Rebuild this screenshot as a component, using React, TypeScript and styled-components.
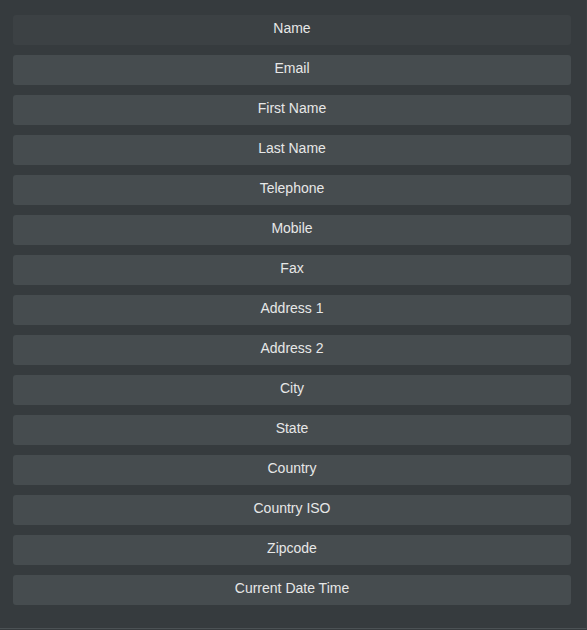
import styled, { createGlobalStyle } from 'styled-components';

const GlobalStyle = createGlobalStyle`
    html, body {
        margin: 0;
        padding: 0;
        background: #363b3e;
    }
`;

const Panel = styled.div`
    box-sizing: border-box;
    width: 587px;
    height: 629px;
    padding: 15px 15px 0 13px;
    background: #363b3e;
    border-bottom: 1px solid #4b5154;
    border-right: 1px solid #3a3f42;
    display: flex;
    flex-direction: column;
    gap: 10px;
    font-family: 'Liberation Sans', Arial, sans-serif;
`;

const Field = styled.div<{ $active?: boolean }>`
    height: 30px;
    display: flex;
    align-items: center;
    justify-content: center;
    border-radius: 3px;
    background: ${(p) => (p.$active ? '#3c4144' : '#464c4f')};
    color: #e6e7e7;
    font-size: 14px;
    padding-bottom: 5px;
    box-sizing: border-box;
`;

const fields = [
    'Name',
    'Email',
    'First Name',
    'Last Name',
    'Telephone',
    'Mobile',
    'Fax',
    'Address 1',
    'Address 2',
    'City',
    'State',
    'Country',
    'Country ISO',
    'Zipcode',
    'Current Date Time',
];

const App = () => {
    return (
        <>
            <GlobalStyle />
            <Panel>
                {fields.map((f, i) => (
                    <Field key={f} $active={i === 0}>
                        {f}
                    </Field>
                ))}
            </Panel>
        </>
    );
};

export default App;
